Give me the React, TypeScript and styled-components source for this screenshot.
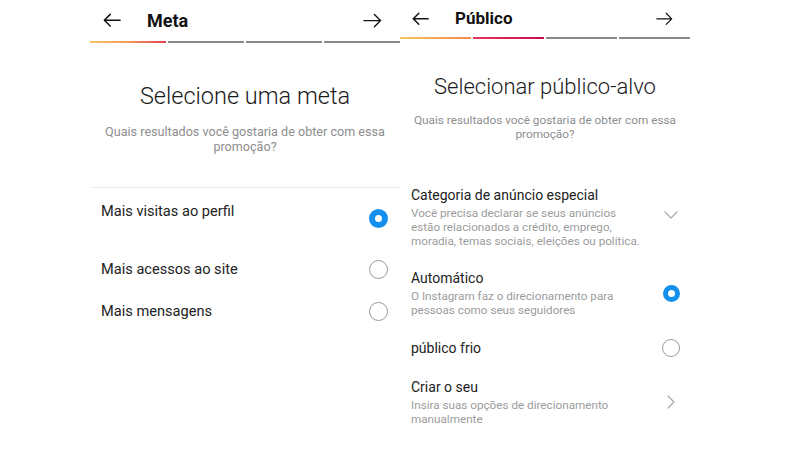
import React from "react";
import styled, { createGlobalStyle } from "styled-components";

const Global = createGlobalStyle`
  html, body { margin: 0; padding: 0; background: #ffffff; }
  body { font-family: Roboto, "Liberation Sans", Arial, sans-serif; color: #262626; }
  * { box-sizing: border-box; }
`;

const Page = styled.div`
  width: 800px;
  height: 450px;
  display: flex;
  padding-left: 90px;
  overflow: hidden;
`;

const Panel = styled.section<{ $w: number }>`
  width: ${(p) => p.$w}px;
  height: 450px;
  display: flex;
  flex-direction: column;
  background: #fff;
`;

const Header = styled.header<{ $h: number; $pl: number; $pr: number; $gap: number; $fs: number }>`
  height: ${(p) => p.$h}px;
  display: flex;
  align-items: center;
  padding: 0 ${(p) => p.$pr}px 0 ${(p) => p.$pl}px;
  gap: ${(p) => p.$gap}px;
  font-size: ${(p) => p.$fs}px;
`;

const HeaderTitle = styled.h1`
  margin: 0;
  flex: 1;
  font-size: inherit;
  font-weight: 700;
  color: #111;
  line-height: 1;
`;

const IconBox = styled.span`
  display: flex;
  align-items: center;
  color: #111;
`;

const Progress = styled.div<{ $gap: number; $h: number }>`
  display: flex;
  gap: ${(p) => p.$gap}px;
  height: ${(p) => p.$h}px;
`;

const Segment = styled.div<{ $bg: string }>`
  flex: 1;
  background: ${(p) => p.$bg};
`;

const Title = styled.h2<{ $fs: number; $mt: number; $lh: number }>`
  margin: ${(p) => p.$mt}px 0 0;
  font-size: ${(p) => p.$fs}px;
  line-height: ${(p) => p.$lh}px;
  font-weight: 300;
  text-align: center;
  color: #1a1a1a;
`;

const Subtitle = styled.p<{ $fs: number; $lh: number; $mt: number; $mw: number }>`
  margin: ${(p) => p.$mt}px auto 0;
  max-width: ${(p) => p.$mw}px;
  font-size: ${(p) => p.$fs}px;
  line-height: ${(p) => p.$lh}px;
  color: #8e8e8e;
  text-align: center;
`;

const Divider = styled.hr`
  margin: 33px 0 0 2px;
  border: 0;
  border-top: 1px solid #ebebeb;
`;

const GoalRow = styled.div<{ $h: number }>`
  height: ${(p) => p.$h}px;
  display: flex;
  align-items: center;
  padding: 0 12px 0 11px;
  font-size: 14.6px;
  line-height: 20px;
  color: #222;
`;

const GoalLabel = styled.span<{ $top?: boolean }>`
  flex: 1;
  align-self: ${(p) => (p.$top ? "flex-start" : "center")};
  padding-top: ${(p) => (p.$top ? 13 : 0)}px;
`;

const Radio = styled.span<{ $on: boolean; $size: number }>`
  display: block;
  width: ${(p) => p.$size}px;
  height: ${(p) => p.$size}px;
  border-radius: 50%;
  border: ${(p) => (p.$on ? `${Math.round(p.$size * 0.31)}px solid #1390ee` : "1px solid #9a9a9a")};
  background: #fff;
`;

const OptionList = styled.div`
  margin-top: 45px;
  display: flex;
  flex-direction: column;
  gap: 21.5px;
  padding: 0 10px 0 11px;
`;

const OptionRow = styled.div`
  display: flex;
  align-items: center;
  gap: 10px;
`;

const OptionText = styled.div`
  flex: 1;
  display: flex;
  flex-direction: column;
  gap: 2px;
`;

const OptionTitle = styled.div`
  font-size: 14px;
  line-height: 18px;
  color: #222;
`;

const OptionDesc = styled.div`
  font-size: 11.7px;
  line-height: 14px;
  color: #9c9c9c;
  white-space: nowrap;
`;

const Control = styled.span<{ $dy?: number }>`
  width: 18px;
  display: flex;
  justify-content: center;
  align-items: center;
  margin-top: ${(p) => p.$dy ?? 0}px;
`;

const ArrowLeft = ({ w }: { w: number }) => (
  <svg width={w} height={w * 0.8} viewBox="0 0 20 16" fill="none" stroke="currentColor" strokeWidth={1.7} strokeLinecap="round" strokeLinejoin="round">
    <path d="M19 8H1.5M8 1.5L1.5 8L8 14.5" />
  </svg>
);

const ArrowRight = ({ w }: { w: number }) => (
  <svg width={w} height={w * 0.8} viewBox="0 0 20 16" fill="none" stroke="currentColor" strokeWidth={1.4} strokeLinecap="round" strokeLinejoin="round">
    <path d="M1 8H18.5M12 1.5L18.5 8L12 14.5" />
  </svg>
);

const ChevronDown = () => (
  <svg width="14" height="8" viewBox="0 0 14 8" fill="none" stroke="#a8a8a8" strokeWidth={1.2} strokeLinecap="round" strokeLinejoin="round">
    <path d="M1 1L7 7L13 1" />
  </svg>
);

const ChevronRight = () => (
  <svg width="8" height="14" viewBox="0 0 8 14" fill="none" stroke="#a8a8a8" strokeWidth={1.2} strokeLinecap="round" strokeLinejoin="round">
    <path d="M1 1L7 7L1 13" />
  </svg>
);

const GRAY = "#8a8a8a";

export default function App() {
  return (
    <>
      <Global />
      <Page>
        <Panel $w={310}>
          <Header $h={41} $pl={13} $pr={18} $gap={26} $fs={18}>
            <IconBox><ArrowLeft w={18} /></IconBox>
            <HeaderTitle>Meta</HeaderTitle>
            <IconBox><ArrowRight w={19} /></IconBox>
          </Header>
          <Progress $gap={2.5} $h={2}>
            <Segment $bg="linear-gradient(90deg, #f7c462, #f29a5a 50%, #e2404f)" />
            <Segment $bg={GRAY} />
            <Segment $bg={GRAY} />
            <Segment $bg={GRAY} />
          </Progress>
          <Title $fs={23.5} $lh={28} $mt={39}>Selecione uma meta</Title>
          <Subtitle $fs={12.6} $lh={15} $mt={14} $mw={296}>
            Quais resultados você gostaria de obter com essa promoção?
          </Subtitle>
          <Divider />
          <GoalRow $h={60}>
            <GoalLabel $top>Mais visitas ao perfil</GoalLabel>
            <Radio $on $size={19} />
          </GoalRow>
          <GoalRow $h={42}>
            <GoalLabel>Mais acessos ao site</GoalLabel>
            <Radio $on={false} $size={19} />
          </GoalRow>
          <GoalRow $h={42}>
            <GoalLabel>Mais mensagens</GoalLabel>
            <Radio $on={false} $size={19} />
          </GoalRow>
        </Panel>

        <Panel $w={290}>
          <Header $h={37} $pl={12} $pr={17} $gap={26} $fs={17}>
            <IconBox><ArrowLeft w={17} /></IconBox>
            <HeaderTitle>Público</HeaderTitle>
            <IconBox><ArrowRight w={17} /></IconBox>
          </Header>
          <Progress $gap={2.5} $h={1.6}>
            <Segment $bg="linear-gradient(90deg, #f6c654, #f3894f)" />
            <Segment $bg="linear-gradient(90deg, #e5375a, #c90c4d)" />
            <Segment $bg={GRAY} />
            <Segment $bg={GRAY} />
          </Progress>
          <Title $fs={22} $lh={26} $mt={35}>Selecionar público-alvo</Title>
          <Subtitle $fs={11.8} $lh={14} $mt={13} $mw={276}>
            Quais resultados você gostaria de obter com essa promoção?
          </Subtitle>
          <OptionList>
            <OptionRow>
              <OptionText>
                <OptionTitle>Categoria de anúncio especial</OptionTitle>
                <OptionDesc>
                  Você precisa declarar se seus anúncios
                  <br />
                  estão relacionados a crédito, emprego,
                  <br />
                  moradia, temas sociais, eleições ou política.
                </OptionDesc>
              </OptionText>
              <Control $dy={-4}><ChevronDown /></Control>
            </OptionRow>
            <OptionRow>
              <OptionText>
                <OptionTitle>Automático</OptionTitle>
                <OptionDesc>
                  O Instagram faz o direcionamento para
                  <br />
                  pessoas como seus seguidores
                </OptionDesc>
              </OptionText>
              <Control><Radio $on $size={17} /></Control>
            </OptionRow>
            <OptionRow>
              <OptionText>
                <OptionTitle>público frio</OptionTitle>
              </OptionText>
              <Control><Radio $on={false} $size={18} /></Control>
            </OptionRow>
            <OptionRow>
              <OptionText>
                <OptionTitle>Criar o seu</OptionTitle>
                <OptionDesc>
                  Insira suas opções de direcionamento
                  <br />
                  manualmente
                </OptionDesc>
              </OptionText>
              <Control><ChevronRight /></Control>
            </OptionRow>
          </OptionList>
        </Panel>
      </Page>
    </>
  );
}
